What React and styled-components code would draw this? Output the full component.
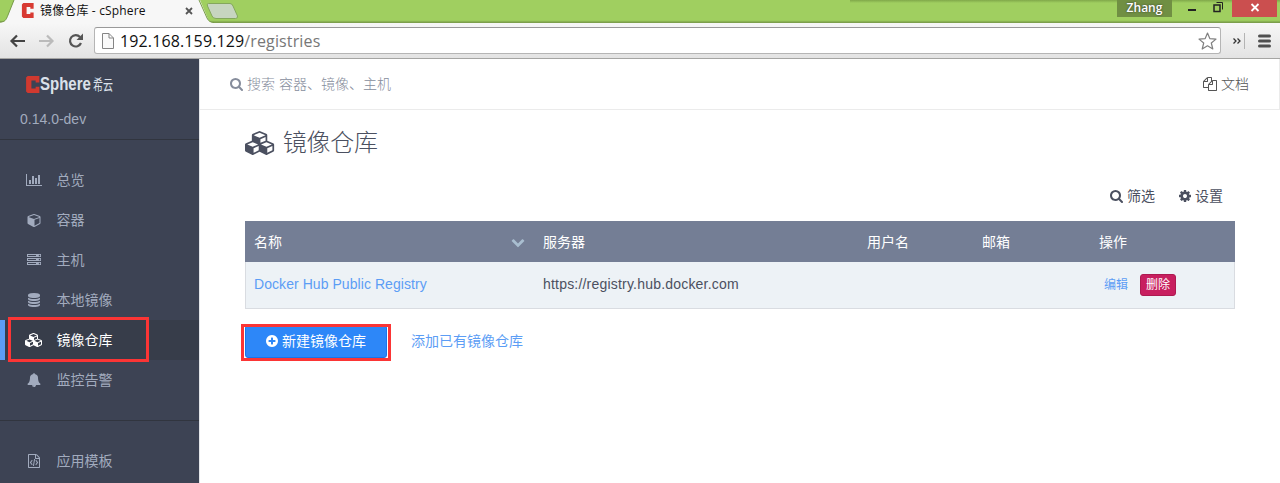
import React from 'react';
import styled, { createGlobalStyle } from 'styled-components';

const GlobalStyle = createGlobalStyle`
  * { box-sizing: border-box; }
  body {
    margin: 0;
    overflow: hidden;
    background: #fff;
    font: 400 14px/20px "Liberation Sans", "Noto Sans CJK SC", sans-serif;
    color: #4b5060;
  }
  a { text-decoration: none; color: inherit; }
  svg { display: block; flex: none; }
`;

const ICONS = {
  search: [1664, 'M1216 832q0-185-131.5-316.5t-316.5-131.5-316.5 131.5-131.5 316.5 131.5 316.5 316.5 131.5 316.5-131.5 131.5-316.5zm512 832q0 52-38 90t-90 38q-54 0-90-38l-343-342q-179 124-399 124-143 0-273.5-55.5t-225-150-150-225-55.5-273.5 55.5-273.5 150-225 225-150 273.5-55.5 273.5 55.5 225 150 150 225 55.5 273.5q0 220-124 399l343 343q37 37 37 90z', 64],
  chart: [2048, 'M640 896v512h-256v-512h256zm384-512v1024h-256v-1024h256zm1024 1152v128h-2048v-1536h128v1408h1920zm-640-896v768h-256v-768h256zm384-384v1152h-256v-1152h256z', 0],
  cube: [1792, 'M896 1629l640-349v-636l-640 233v752zm-64-865l698-254-698-254-698 254zm832-252v768q0 35-18 65t-49 47l-704 384q-28 16-61 16t-61-16l-704-384q-31-17-49-47t-18-65v-768q0-40 23-73t61-47l704-256q22-8 44-8t44 8l704 256q38 14 61 47t23 73z', -64],
  cubes: [2304, 'M640 1632l384-192v-314l-384 164v342zm-64-454l404-173-404-173-404 173zm1088 454l384-192v-314l-384 164v342zm-64-454l404-173-404-173-404 173zm-448-293l384-165v-266l-384 164v267zm-64-379l441-189-441-189-441 189zm1088 518v416q0 36-19 67t-52 47l-448 224q-25 14-57 14t-57-14l-448-224q-4-2-7-4-2 2-7 4l-448 224q-25 14-57 14t-57-14l-448-224q-33-16-52-47t-19-67v-416q0-38 21.5-70t56.5-48l434-186v-400q0-38 21.5-70t56.5-48l448-192q23-10 50-10t50 10l448 192q35 16 56.5 48t21.5 70v400l434 186q36 16 57 48t21 70z', 0],
  server: [1792, 'M128 1408h1024v-128h-1024v128zm0-512h1024v-128h-1024v128zm1568 448q0-40-28-68t-68-28-68 28-28 68 28 68 68 28 68-28 28-68zm-1568-960h1024v-128h-1024v128zm1568 448q0-40-28-68t-68-28-68 28-28 68 28 68 68 28 68-28 28-68zm0-512q0-40-28-68t-68-28-68 28-28 68 28 68 68 28 68-28 28-68zm96 832v384h-1792v-384h1792zm0-512v384h-1792v-384h1792zm0-512v384h-1792v-384h1792z', 0],
  database: [1536, 'M896 768q237 0 443-43t325-127v170q0 69-103 128t-280 93.5-385 34.5-385-34.5-280-93.5-103-128v-170q119 84 325 127t443 43zm0 768q237 0 443-43t325-127v170q0 69-103 128t-280 93.5-385 34.5-385-34.5-280-93.5-103-128v-170q119 84 325 127t443 43zm0-384q237 0 443-43t325-127v170q0 69-103 128t-280 93.5-385 34.5-385-34.5-280-93.5-103-128v-170q119 84 325 127t443 43zm0-1152q208 0 385 34.5t280 93.5 103 128v128q0 69-103 128t-280 93.5-385 34.5-385-34.5-280-93.5-103-128v-128q0-69 103-128t280-93.5 385-34.5z', 128],
  bell: [1792, 'M912 1696q0-16-16-16-59 0-101.5-42.5t-42.5-101.5q0-16-16-16t-16 16q0 73 51.5 124.5t124.5 51.5q16 0 16-16zm816-288q0 52-38 90t-90 38h-448q0 106-75 181t-181 75-181-75-75-181h-448q-52 0-90-38t-38-90q50-42 91-88t85-119.5 74.5-158.5 50-206 19.5-260q0-152 117-282.5t307-158.5q-8-19-8-39 0-40 28-68t68-28 68 28 28 68q0 20-8 39 190 28 307 158.5t117 282.5q0 139 19.5 260t50 206 74.5 158.5 85 119.5 91 88z', 0],
  code: [1536, 'M1596 380q28 28 48 76t20 88v1152q0 40-28 68t-68 28h-1344q-40 0-68-28t-28-68v-1600q0-40 28-68t68-28h896q40 0 88 20t76 48zm-444-244v376h376q-10-29-22-41l-313-313q-12-12-41-22zm384 1528v-1024h-416q-40 0-68-28t-28-68v-416h-768v1536h1280zm-928-896q8-11 21-12.5t24 6.5l51 38q11 8 12.5 21t-6.5 24l-182 243 182 243q8 11 6.5 24t-12.5 21l-51 38q-11 8-24 6.5t-21-12.5l-226-301q-14-19 0-38zm802 301q14 19 0 38l-226 301q-8 11-21 12.5t-24-6.5l-51-38q-11-8-12.5-21t6.5-24l182-243-182-243q-8-11-6.5-24t12.5-21l51-38q11-8 24-6.5t21 12.5zm-620 461q-13-2-20.5-13t-5.5-24l138-831q2-13 13-20.5t24-5.5l63 10q13 2 20.5 13t5.5 24l-138 831q-2 13-13 20.5t-24 5.5z', 128],
  files: [1792, 'M1696 384q40 0 68 28t28 68v1216q0 40-28 68t-68 28h-960q-40 0-68-28t-28-68v-288h-544q-40 0-68-28t-28-68v-672q0-40 20-88t48-76l408-408q28-28 76-48t88-20h416q40 0 68 28t28 68v328q68-40 128-40h416zm-544 213l-299 299h299v-299zm-640-384l-299 299h299v-299zm196 647l316-316v-416h-384v416q0 40-28 68t-68 28h-416v640h512v-256q0-40 20-88t48-76zm956 804v-1152h-384v416q0 40-28 68t-68 28h-416v640h896z', 0],
  cog: [1536, 'M1152 896q0-106-75-181t-181-75-181 75-75 181 75 181 181 75 181-75 75-181zm512-109v222q0 12-8 23t-20 13l-185 28q-19 54-39 91 35 50 107 138 10 12 10 25t-9 23q-27 37-99 108t-94 71q-12 0-26-9l-138-108q-44 23-91 38-16 136-29 186-7 28-36 28h-222q-14 0-24.5-8.5t-11.5-21.5l-28-184q-49-16-90-37l-141 107q-10 9-25 9-14 0-25-11-126-114-165-168-7-10-7-23 0-12 8-23 15-21 51-66.5t54-70.5q-27-50-41-99l-183-27q-13-2-21-12.5t-8-23.5v-222q0-12 8-23t19-13l186-28q14-46 39-92-40-57-107-138-10-12-10-24 0-10 9-23 26-36 98.5-107.5t94.5-71.5q13 0 26 10l138 107q44-23 91-38 16-136 29-186 7-28 36-28h222q14 0 24.5 8.5t11.5 21.5l28 184q49 16 90 37l142-107q9-9 24-9 13 0 25 10 129 119 165 170 7 8 7 22 0 12-8 23-15 21-51 66.5t-54 70.5q26 50 41 98l183 28q13 2 21 12.5t8 23.5z', 128],
  plus: [1536, 'M1344 960v-128q0-26-19-45t-45-19h-256v-256q0-26-19-45t-45-19h-128q-26 0-45 19t-19 45v256h-256q-26 0-45 19t-19 45v128q0 26 19 45t45 19h256v256q0 26 19 45t45 19h128q26 0 45-19t19-45v-256h256q26 0 45-19t19-45zm320-64q0 209-103 385.5t-279.5 279.5-385.5 103-385.5-103-279.5-279.5-103-385.5 103-385.5 279.5-279.5 385.5-103 385.5 103 279.5 279.5 103 385.5z', 128],
  chevron: [1792, 'M1683 808l-742 741q-19 19-45 19t-45-19l-742-741q-19-19-19-45.5t19-45.5l166-165q19-19 45-19t45 19l531 531 531-531q19-19 45-19t45 19l166 165q19 19 19 45.5t-19 45.5z', 0],
};

function Icon({ name, size = 14 }) {
  const [w, d, x] = ICONS[name];
  return (
    <svg width={(size * w) / 1792} height={size} viewBox={`${x} 0 ${w} 1792`} fill="currentColor" aria-hidden="true">
      <path d={d} />
    </svg>
  );
}

/* ---------- browser window ---------- */

const Page = styled.div`
  width: 1280px;
  height: 483px;
  display: flex;
  flex-direction: column;
  overflow: hidden;
`;

const TabStrip = styled.div`
  position: relative;
  height: 23px;
  flex: none;
  display: flex;
  align-items: flex-start;
  background: linear-gradient(#a0cf60 0 20px, #98c55b 21px, #7c9f4c 22px);
`;

const TabShapes = styled.svg`
  position: absolute;
  left: 0;
  top: 0;
`;

const Tab = styled.div`
  position: relative;
  display: flex;
  align-items: center;
  width: 1117px;
  height: 21px;
  padding-left: 21px;
  font: 400 12px/20px "Open Sans", "Noto Sans CJK SC", sans-serif;
  color: #111;
`;

const TabTitle = styled.span`
  width: 145px;
  margin-left: 5px;
  padding-top: 1px;
  letter-spacing: 0.15px;
  white-space: nowrap;
`;

const WindowEdge = styled.div`
  position: absolute;
  left: 850px;
  top: 0;
  width: 430px;
  height: 3px;
  background: linear-gradient(rgba(80, 110, 40, 0.4), transparent);
`;

const UserBadge = styled.div`
  position: relative;
  width: 55px;
  height: 17px;
  background: #708f43;
  color: #fff;
  font: 600 12px/16px "Open Sans", sans-serif;
  text-align: center;
  text-shadow: 0 0 2px #333;
`;

const WindowButtons = styled.svg`
  position: relative;
`;

const Toolbar = styled.div`
  height: 36px;
  flex: none;
  display: flex;
  align-items: center;
  padding: 0 8px 0 9px;
  background: linear-gradient(#f7f7f7, #e3e3e3);
  border-bottom: 1px solid #a5a5a3;
`;

const AddressBar = styled.div`
  flex: none;
  width: 1127px;
  height: 27px;
  margin-left: 9px;
  padding: 0 3px 0 7px;
  display: flex;
  align-items: center;
  background: #fff;
  border: 1px solid #b5b5b5;
  border-top-color: #999;
  border-radius: 3px;
`;

const Url = styled.span`
  flex: 1;
  margin-left: 6px;
  font: 400 16px/24px "Open Sans", sans-serif;
  letter-spacing: 0.13px;
  color: #111;
`;

const UrlPath = styled.span`
  color: #777;
`;

/* ---------- application ---------- */

const Body = styled.div`
  flex: 1;
  min-height: 0;
  display: flex;
`;

const Sidebar = styled.nav`
  width: 200px;
  flex: none;
  background: #3d4354;
  border-right: 1px solid #e4e6ea;
  color: #a2abbe;
`;

const Brand = styled.div`
  height: 81px;
  padding: 11px 0 0 20px;
  border-bottom: 1px solid #31353f;
`;

const Logo = styled.div`
  display: flex;
  align-items: center;
  height: 28px;
  padding-left: 6px;
  color: #dbe1ea;
`;

const LogoName = styled.span`
  width: 53px;
  font: bold 15px/20px "Liberation Sans", sans-serif;
  transform: scaleY(1.25);
`;

const LogoSuffix = styled.span`
  font: 400 10px/16px "Noto Sans CJK SC", sans-serif;
  white-space: nowrap;
  transform: scaleY(1.45);
`;

const Version = styled.div`
  margin-top: 11px;
`;

const NavGroup = styled.div`
  padding: 20px 0;
  border-bottom: 1px solid #31353f;
`;

const NavItem = styled.a`
  position: relative;
  display: flex;
  align-items: center;
  height: 40px;
  background: ${(p) => (p.$active ? '#373d4a' : 'transparent')};
  color: ${(p) => (p.$active ? '#fff' : '#a2abbe')};
  border-left: 5px solid ${(p) => (p.$active ? '#5c9df5' : 'transparent')};
`;

const NavIcon = styled.span`
  width: 58px;
  margin-right: -6.5px;
  display: flex;
  justify-content: center;
`;

const Highlight = styled.span`
  position: absolute;
  left: ${(p) => p.$x}px;
  top: ${(p) => p.$y}px;
  width: ${(p) => p.$w}px;
  height: ${(p) => p.$h}px;
  border: 3px solid #fb3535;
  pointer-events: none;
`;

const Main = styled.main`
  flex: 1;
  min-width: 0;
`;

const TopBar = styled.header`
  height: 51px;
  padding: 0 30px 1px;
  display: flex;
  align-items: center;
  justify-content: space-between;
  border-bottom: 1px solid #ebebeb;
  border-right: 1px solid #ebebeb;
  font-weight: 300;
`;

const IconText = styled.span`
  display: flex;
  align-items: center;
  gap: 4px;
  color: ${(p) => p.$color || 'inherit'};
`;

const Content = styled.section`
  padding: 17px 45px 0;
`;

const Title = styled.h1`
  display: flex;
  align-items: center;
  gap: 7px;
  margin: 0;
  height: 32px;
  font-size: 24px;
  line-height: 32px;
  font-weight: 300;
  letter-spacing: -0.3px;
  color: #4b5060;
`;

const Actions = styled.div`
  display: flex;
  justify-content: flex-end;
  gap: 24px;
  margin: 27px 0 15px;
  padding-right: 12px;
`;

const Row = styled.div`
  display: grid;
  grid-template-columns: 289px 324px 115px 117px 1fr;
  align-items: center;
`;

const HeadRow = styled(Row)`
  height: 41px;
  background: #747e95;
  color: #fff;
`;

const DataRow = styled(Row)`
  height: 47px;
  background: #edf2f6;
  box-shadow: inset 0 -1px #d9dce1, inset 1px 0 #d9dce1, inset -1px 0 #d9dce1;
`;

const Cell = styled.div`
  display: flex;
  align-items: center;
  justify-content: space-between;
  padding: 0 9px;
`;

const DataCell = styled(Cell)`
  padding-bottom: 3px;
  letter-spacing: ${(p) => p.$spacing || '0'};
`;

const Sort = styled.span`
  color: #a9bed0;
`;

const Link = styled.a`
  color: #5c9df5;
`;

const RowActions = styled.div`
  display: flex;
  align-items: center;
  gap: 12px;
  padding: 0 14px 1px;
  font-size: 12px;
`;

const DeleteButton = styled.button`
  width: 36px;
  height: 22px;
  padding: 1px 0 0;
  border: 1px solid #ad1a50;
  border-radius: 3px;
  background: #c81f5f;
  color: #fff;
  font: inherit;
  line-height: 19px;
`;

const Footer = styled.div`
  display: flex;
  align-items: center;
  gap: 24px;
  margin-top: 16px;
`;

const FooterLink = styled(Link)`
  padding-bottom: 2px;
`;

const CreateWrap = styled.div`
  position: relative;
`;

const CreateButton = styled.button`
  display: flex;
  align-items: center;
  justify-content: center;
  gap: 4px;
  width: 142px;
  height: 33px;
  padding: 0 0 2px;
  border: 1px solid #1874ea;
  border-radius: 3px;
  background: #2d87f8;
  color: #fff;
  font: inherit;
`;

const NAV = [
  ['chart', '总览'],
  ['cube', '容器'],
  ['server', '主机'],
  ['database', '本地镜像'],
  ['cubes', '镜像仓库'],
  ['bell', '监控告警'],
];

function LogoMark({ width, height, color }) {
  return (
    <svg width={width} height={height} viewBox="0 0 13 16" fill={color}>
      <path d="M1.500 0H12.500V6H9V4.200H5V11.800H9V10H12.500V16H1.500L0 14.500V1.500Z" />
    </svg>
  );
}

function Browser() {
  return (
    <>
      <TabStrip>
        <TabShapes width="260" height="23">
          <path d="M0 22.5C5 22 6 20 8 15L14 0H200L208 19Q209.500 22.500 213 22.500V23H0Z" fill="#f7f7f7" />
          <path d="M0 22C5 22 6 20 8 15L14 0M199 0L207 18Q209 22.500 214 22.500" fill="none" stroke="#779a48" />
          <path d="M208.500 3.500H230Q232 3.500 233 6L237.500 16Q238 18.500 235.500 18.500H216Q213 18.500 212 16L207.500 6Q206.500 3.500 208.500 3.500Z" fill="#c7d5c0" stroke="#84a75c" />
        </TabShapes>
        <Tab>
          <LogoMark width={14} height={15} color="#d83a32" />
          <TabTitle>镜像仓库 - cSphere</TabTitle>
          <svg width="8" height="8" viewBox="0 0 8 8" stroke="#555" strokeWidth="1.800">
            <path d="M1 1L7 7M7 1L1 7" />
          </svg>
        </Tab>
        <WindowEdge />
        <UserBadge>Zhang</UserBadge>
        <WindowButtons width="108" height="17">
          <path d="M16 9h8v2h-8z" fill="#222" />
          <path d="M44.500 2.500H50.500V9.500" fill="none" stroke="#222" />
          <path d="M42 5h6v6.500h-6v-6.500z" fill="none" stroke="#222" strokeWidth="1.500" />
          <path d="M60 0h45v17H60z" fill="#cb4f4f" />
          <path d="M79.500 4L86.500 11M86.500 4L79.500 11" stroke="#fff" strokeWidth="1.800" />
        </WindowButtons>
      </TabStrip>
      <Toolbar>
        <svg width="76" height="18" viewBox="0 0 76 18" fill="none" strokeWidth="2.200">
          <path d="M16 9H3M8 3.500L2.500 9L8 14.500" stroke="#444" />
          <path d="M30 9H43M38 3.500L43.500 9L38 14.500" stroke="#bbb" />
          <path d="M71 5A5.700 5.700 0 1 0 72 11" stroke="#555" />
          <path d="M74 1.500V8H67.500Z" fill="#555" />
        </svg>
        <AddressBar>
          <svg width="12" height="16" viewBox="0 0 12 16" fill="#fafafa" stroke="#858585">
            <path d="M0.500 0.500H7L11.500 5V15.500H0.500ZM7 0.500V5H11.500" />
          </svg>
          <Url>192.168.159.129<UrlPath>/registries</UrlPath></Url>
          <svg width="19" height="18" viewBox="0 0 19 18" fill="#fff" stroke="#808080" strokeWidth="1.200">
            <path d="M9.500 1L11.800 6.600L18 7.100L13.300 11L14.800 17L9.500 13.800L4.200 17L5.700 11L1 7.100L7.200 6.600Z" strokeLinejoin="round" />
          </svg>
        </AddressBar>
        <svg width="51" height="24" viewBox="0 0 51 24" fill="none">
          <path d="M12.500 9.500L15 12L12.500 14.500M16.500 9.500L19 12L16.500 14.500" stroke="#333" strokeWidth="1.300" />
          <path d="M23.500 4V20" stroke="#b4b4b4" />
          <path d="M38.500 7H48.500M38.500 12H48.500M38.500 17H48.500" stroke="#505050" strokeWidth="3" strokeLinecap="round" />
        </svg>
      </Toolbar>
    </>
  );
}

function SideNav() {
  return (
    <Sidebar>
      <Brand>
        <Logo>
          <LogoMark width={14} height={17} color="#d0392f" />
          <LogoName>Sphere</LogoName>
          <LogoSuffix>希云</LogoSuffix>
        </Logo>
        <Version>0.14.0-dev</Version>
      </Brand>
      <NavGroup>
        {NAV.map(([icon, label]) => (
          <NavItem key={icon} $active={icon === 'cubes'}>
            <NavIcon><Icon name={icon} /></NavIcon>
            {label}
            {icon === 'cubes' && <Highlight $x={3} $y={-3} $w={141} $h={45} />}
          </NavItem>
        ))}
      </NavGroup>
      <NavGroup>
        <NavItem>
          <NavIcon><Icon name="code" /></NavIcon>
          应用模板
        </NavItem>
      </NavGroup>
    </Sidebar>
  );
}

export default function App() {
  return (
    <Page>
      <GlobalStyle />
      <Browser />
      <Body>
        <SideNav />
        <Main>
          <TopBar>
            <IconText $color="#868d9c"><Icon name="search" />搜索 容器、镜像、主机</IconText>
            <IconText $color="#555"><Icon name="files" />文档</IconText>
          </TopBar>
          <Content>
            <Title><Icon name="cubes" size={24} />镜像仓库</Title>
            <Actions>
              <IconText><Icon name="search" />筛选</IconText>
              <IconText><Icon name="cog" />设置</IconText>
            </Actions>
            <HeadRow>
              <Cell>名称<Sort><Icon name="chevron" /></Sort></Cell>
              <Cell>服务器</Cell>
              <Cell>用户名</Cell>
              <Cell>邮箱</Cell>
              <Cell>操作</Cell>
            </HeadRow>
            <DataRow>
              <DataCell $spacing="0.06px"><Link>Docker Hub Public Registry</Link></DataCell>
              <DataCell $spacing="0.2px">https://registry.hub.docker.com</DataCell>
              <Cell />
              <Cell />
              <RowActions>
                <Link>编辑</Link>
                <DeleteButton>删除</DeleteButton>
              </RowActions>
            </DataRow>
            <Footer>
              <CreateWrap>
                <CreateButton><Icon name="plus" />新建镜像仓库</CreateButton>
                <Highlight $x={-4} $y={-1} $w={150} $h={37} />
              </CreateWrap>
              <FooterLink>添加已有镜像仓库</FooterLink>
            </Footer>
          </Content>
        </Main>
      </Body>
    </Page>
  );
}
